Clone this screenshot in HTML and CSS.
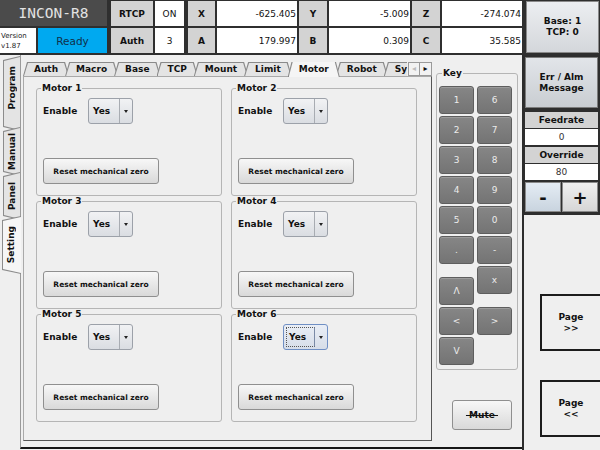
FILE: index.html
```html
<!DOCTYPE html>
<html lang="en">
<head>
  <meta charset="UTF-8">
  <title>INCON-R8 设置 - Motor</title>
  <link rel="stylesheet" href="styles.css">
</head>
<body>
<div class="screen">

  <!-- 顶部状态栏 -->
  <header class="status">
    <div class="cell brand">INCON-R8</div>
    <div class="cell lbl shift">RTCP</div>
    <div class="cell">ON</div>
    <div class="cell lbl shift">X</div>
    <div class="cell num">-625.405</div>
    <div class="cell lbl">Y</div>
    <div class="cell num">-5.009</div>
    <div class="cell lbl">Z</div>
    <div class="cell num">-274.074</div>
    <div class="cell base-box">Base: 1<br>TCP: 0</div>

    <div class="cell version"><span>Version</span><span>v1.87</span></div>
    <div class="cell ready">Ready</div>
    <div class="cell lbl shift">Auth</div>
    <div class="cell">3</div>
    <div class="cell lbl shift">A</div>
    <div class="cell num">179.997</div>
    <div class="cell lbl">B</div>
    <div class="cell num">0.309</div>
    <div class="cell lbl">C</div>
    <div class="cell num">35.585</div>
  </header>

  <div class="main">
    <!-- 左侧竖排标签 -->
    <nav class="side-tabs">
      <div class="vtab t-program"><span>Program</span></div>
      <div class="vtab t-manual"><span>Manual</span></div>
      <div class="vtab t-panel"><span>Panel</span></div>
      <div class="vtab t-setting on"><span>Setting</span></div>
    </nav>

    <div class="outer">
      <section class="subtabs">
        <div class="tabbar">
          <div class="tabs-clip">
            <div class="tab">Auth</div>
            <div class="tab">Macro</div>
            <div class="tab">Base</div>
            <div class="tab">TCP</div>
            <div class="tab">Mount</div>
            <div class="tab">Limit</div>
            <div class="tab on">Motor</div>
            <div class="tab">Robot</div>
            <div class="tab">System</div>
          </div>
          <div class="tab-scroll">
            <span class="off">&#9666;</span>
            <span>&#9656;</span>
          </div>
        </div>

        <div class="tabpane">
          <fieldset class="motor">
            <legend>Motor 1</legend>
            <div class="field"><label>Enable</label><div class="combo"><span class="val">Yes</span><span class="arr"></span></div></div>
            <button class="reset">Reset mechanical zero</button>
          </fieldset>
          <fieldset class="motor">
            <legend>Motor 2</legend>
            <div class="field"><label>Enable</label><div class="combo"><span class="val">Yes</span><span class="arr"></span></div></div>
            <button class="reset">Reset mechanical zero</button>
          </fieldset>
          <fieldset class="motor">
            <legend>Motor 3</legend>
            <div class="field"><label>Enable</label><div class="combo"><span class="val">Yes</span><span class="arr"></span></div></div>
            <button class="reset">Reset mechanical zero</button>
          </fieldset>
          <fieldset class="motor">
            <legend>Motor 4</legend>
            <div class="field"><label>Enable</label><div class="combo"><span class="val">Yes</span><span class="arr"></span></div></div>
            <button class="reset">Reset mechanical zero</button>
          </fieldset>
          <fieldset class="motor">
            <legend>Motor 5</legend>
            <div class="field"><label>Enable</label><div class="combo"><span class="val">Yes</span><span class="arr"></span></div></div>
            <button class="reset">Reset mechanical zero</button>
          </fieldset>
          <fieldset class="motor">
            <legend>Motor 6</legend>
            <div class="field"><label>Enable</label><div class="combo focus"><span class="val">Yes</span><span class="arr"></span></div></div>
            <button class="reset">Reset mechanical zero</button>
          </fieldset>
        </div>
      </section>

      <!-- 软键盘 -->
      <section class="keycol">
        <fieldset class="keys">
          <legend>Key</legend>
          <div class="keygrid">
            <button class="key">1</button><button class="key">6</button>
            <button class="key">2</button><button class="key">7</button>
            <button class="key">3</button><button class="key">8</button>
            <button class="key">4</button><button class="key">9</button>
            <button class="key">5</button><button class="key">0</button>
            <button class="key">.</button><button class="key">-</button>
          </div>
          <div class="keylower">
            <div class="keystack left">
              <button class="key">&Lambda;</button>
              <button class="key">&lt;</button>
              <button class="key">V</button>
            </div>
            <div class="keystack right">
              <button class="key">x</button>
              <button class="key gap">&gt;</button>
            </div>
          </div>
        </fieldset>
        <button class="mute"><s>&nbsp;Mute&nbsp;</s></button>
      </section>
    </div>

    <!-- 右侧面板 -->
    <aside class="side">
      <div class="side-top">
        <button class="err">Err / Alm<br>Message</button>
        <div class="m-lbl first">Feedrate</div>
        <div class="m-val">0</div>
        <div class="m-lbl">Override</div>
        <div class="m-val">80</div>
        <div class="pm">
          <button class="minus">-</button>
          <button class="plus">+</button>
        </div>
      </div>
      <button class="page">Page<br>&gt;&gt;</button>
      <button class="page second">Page<br>&lt;&lt;</button>
    </aside>
  </div>
</div>
</body>
</html>
```

FILE: styles.css
```css
* { box-sizing: border-box; }
body {
  margin: 0;
  background: #efefef;
  font-family: "DejaVu Sans", "Noto Sans", sans-serif;
  color: #111;
}
button {
  font-family: inherit;
  color: #111;
  padding: 0;
}
.screen {
  width: 600px;
  height: 450px;
  overflow: hidden;
}

/* 顶部状态栏 */
.status {
  display: grid;
  grid-template-columns: 36px 69px 44px 29px 29px 80px 28px 81px 28px 80px 75px;
  grid-template-rows: 25px 25px;
  gap: 2px;
  padding: 1px 1px 2px 0;
  height: 55px;
  background: #2f2f2f;
}
.cell {
  display: flex;
  align-items: center;
  justify-content: center;
  font-size: 9px;
  background: #fff;
}
.brand {
  grid-column: span 2;
  margin-top: -1px;
  background: #4b4b4b;
  color: #e2e2e2;
  font-family: "DejaVu Sans Mono", monospace;
  font-size: 14.5px;
}
.lbl {
  background: #d3d3d3;
  font-weight: bold;
}
.num {
  justify-content: flex-end;
  padding-right: 1px;
}
.shift { margin-left: 2px; }
.base-box {
  grid-row: span 2;
  margin-left: 2px;
  background: linear-gradient(#eceef1, #d4d7db);
  border: 1px solid #8a8a8a;
  font-weight: bold;
  text-align: center;
  line-height: 11px;
}
.version {
  flex-direction: column;
  align-items: flex-start;
  padding-left: 1px;
  font-size: 7px;
  line-height: 10px;
  color: #222;
}
.ready {
  background: #00a9f0;
  color: #10304a;
  font-size: 10.5px;
}

.main {
  display: flex;
  height: 395px;
}

/* 左侧竖排标签 */
.side-tabs {
  width: 20px;
  flex: none;
  display: flex;
  flex-direction: column;
  padding-top: 1px;
}
.vtab {
  position: relative;
  z-index: 0;
  display: flex;
  align-items: center;
  justify-content: center;
  margin: -4px 0 0 3px;
  font-size: 9px;
  font-weight: bold;
}
.vtab span {
  writing-mode: vertical-rl;
  transform: rotate(180deg);
}
.vtab::before,
.vtab::after {
  content: "";
  position: absolute;
  z-index: -1;
  clip-path: polygon(0 4px, 100% 0, 100% 100%, 0 calc(100% - 4px));
}
.vtab::before { inset: 0 0 0 0; background: #8c8c8c; }
.vtab::after { inset: 1px 0 1px 1px; background: #e4e4e4; }
.t-program { height: 75px; margin-top: 0; padding-bottom: 12px; }
.t-manual { height: 49px; }
.t-panel { height: 48px; }
.t-setting { height: 58px; }
.vtab.on { z-index: 1; margin-left: 2px; }
.vtab.on::before { right: -1px; }
.vtab.on::after { right: -1px; background: #f6f6f6; }

/* 主区域 */
.outer {
  flex: 1;
  display: flex;
  height: 394px;
  border-left: 1px solid #9a9a9a;
  border-bottom: 2px solid #161616;
}
.subtabs {
  width: 411px;
  flex: none;
  display: flex;
  flex-direction: column;
  padding: 7px 0 6px 2px;
}
.tabbar {
  display: flex;
  height: 15px;
  position: relative;
  z-index: 1;
}
.tabs-clip {
  width: 384px;
  display: flex;
  overflow: hidden;
}
.tab {
  position: relative;
  z-index: 0;
  flex: none;
  padding: 0 11px;
  margin-right: -4px;
  font-size: 9px;
  font-weight: bold;
  line-height: 14px;
}
.tab::before,
.tab::after {
  content: "";
  position: absolute;
  z-index: -1;
  clip-path: polygon(4px 0, calc(100% - 4px) 0, 100% 100%, 0 100%);
}
.tab::before { inset: 0 0 1px 0; background: #8a8a8a; }
.tab::after { inset: 1px 1px 1px 1px; background: #e4e4e4; }
.tab.on { z-index: 1; }
.tab.on::before { inset: -1px 0 0 0; }
.tab.on::after { inset: 0 1px 0 1px; background: #f5f5f5; }
.tab-scroll {
  display: flex;
  margin-left: auto;
  height: 14px;
}
.tab-scroll span {
  width: 12px;
  border: 1px solid #9a9a9a;
  background: #f2f2f2;
  font-size: 8px;
  line-height: 12px;
  text-align: center;
  color: #111;
}
.tab-scroll span + span { border-left: none; }
.tab-scroll .off { color: #bdbdbd; }

.tabpane {
  flex: 1;
  margin-top: -1px;
  border: 1px solid #a9a9a9;
  border-right-color: #555;
  border-bottom-color: #555;
  display: grid;
  grid-template-columns: 186px 186px;
  grid-template-rows: 113px 113px 113px;
  column-gap: 9px;
  padding: 6px 0 0 12px;
}

/* 电机分组 */
.motor {
  margin: 0;
  min-width: 0;
  padding: 0 6px 11px;
  border: 1px solid #b5b5b5;
  border-radius: 3px;
}
.motor legend,
.keys legend {
  margin-left: -2px;
  padding: 0 1px;
  font-size: 9px;
  font-weight: bold;
  line-height: 10px;
}
.field {
  display: flex;
  align-items: center;
  height: 26px;
  margin-top: 5px;
}
.field label {
  width: 45px;
  font-size: 9px;
  font-weight: bold;
}
.combo {
  display: flex;
  width: 45px;
  height: 26px;
  border: 1px solid #9ca1a9;
  border-radius: 3px;
  background: linear-gradient(#f1f2f4, #dadde2);
}
.combo .val {
  flex: 1;
  display: flex;
  align-items: center;
  padding-left: 4px;
  border-right: 1px solid #a8acb2;
  font-size: 9px;
  font-weight: bold;
}
.combo .arr {
  width: 12px;
  display: flex;
  align-items: center;
  justify-content: center;
}
.combo .arr::after {
  content: "";
  border-left: 2.5px solid transparent;
  border-right: 2.5px solid transparent;
  border-top: 3px solid #222;
}
.combo.focus {
  border-color: #6f8fc4;
  background: linear-gradient(#e9eef6, #d6dde8);
}
.combo.focus .val {
  margin: 2px 0 2px 2px;
  padding-left: 2px;
  border: 1px dotted #555;
  border-right: 1px solid #7a8aa6;
}
.reset {
  display: block;
  width: 116px;
  height: 26px;
  margin-top: 34px;
  border: 1px solid #8f8f8f;
  border-radius: 3px;
  background: linear-gradient(#f7f7f7, #d9d9d9);
  font-size: 7.5px;
  font-weight: bold;
}

/* 软键盘 */
.keycol {
  flex: 1;
  padding-left: 4px;
}
.keys {
  width: 82px;
  margin: 13px 0 0;
  padding: 8px 4px 4px 2px;
  border: 1px solid #b5b5b5;
  border-radius: 3px;
}
.keys legend { margin-left: 3px; }
.keygrid {
  display: grid;
  grid-template-columns: 35px 35px;
  gap: 2px 3px;
}
.keylower {
  display: flex;
  gap: 3px;
  margin-top: 2px;
}
.keystack {
  display: flex;
  flex-direction: column;
  gap: 2px;
}
.keystack.left { padding-top: 11px; }
.keystack .gap { margin-top: 11px; }
.key {
  width: 35px;
  height: 28px;
  border: 1px solid #5e5e5e;
  border-radius: 3px;
  background: linear-gradient(#868686, #747474);
  box-shadow: inset 0 1px 0 rgba(255, 255, 255, 0.18);
  color: #ececec;
  font-size: 9px;
}
.mute {
  display: block;
  width: 60px;
  height: 30px;
  margin: 30px 0 0 16px;
  border: 1px solid #8f8f8f;
  border-radius: 3px;
  background: linear-gradient(#f7f7f7, #d9d9d9);
  font-size: 9px;
  font-weight: bold;
}

/* 右侧面板 */
.side {
  width: 78px;
  flex: none;
  border-left: 2px solid #2c2c2c;
}
.side-top {
  display: flex;
  flex-direction: column;
  padding: 2px 2px 3px 1px;
  background: #2e2e2e;
}
.err {
  height: 51px;
  border: 1px solid #7c7c7c;
  background: linear-gradient(#e2e5e9, #c9cdd2);
  font-size: 9px;
  font-weight: bold;
  line-height: 11px;
}
.m-lbl,
.m-val {
  height: 16px;
  display: flex;
  align-items: center;
  justify-content: center;
  font-size: 9px;
}
.m-lbl {
  margin-top: 2px;
  background: #d3d3d3;
  font-weight: bold;
}
.m-lbl.first { margin-top: 4px; }
.m-val {
  margin-top: 1px;
  background: #fff;
  color: #333;
}
.pm {
  display: flex;
  gap: 1px;
  height: 30px;
  margin-top: 2px;
}
.pm button {
  flex: 1;
  border: 1px solid #8a8a8a;
  font-size: 18px;
  font-weight: bold;
}
.minus { background: linear-gradient(#e4ecf4, #c9d4df); }
.plus { background: linear-gradient(#f0f0f0, #d6d6d6); }
.page {
  display: block;
  width: 62px;
  height: 57px;
  margin: 79px 0 0 16px;
  border: 2px solid #1c1c1c;
  background: #efefef;
  font-size: 9px;
  font-weight: bold;
  line-height: 11px;
}
.page.second { margin-top: 29px; }
```
